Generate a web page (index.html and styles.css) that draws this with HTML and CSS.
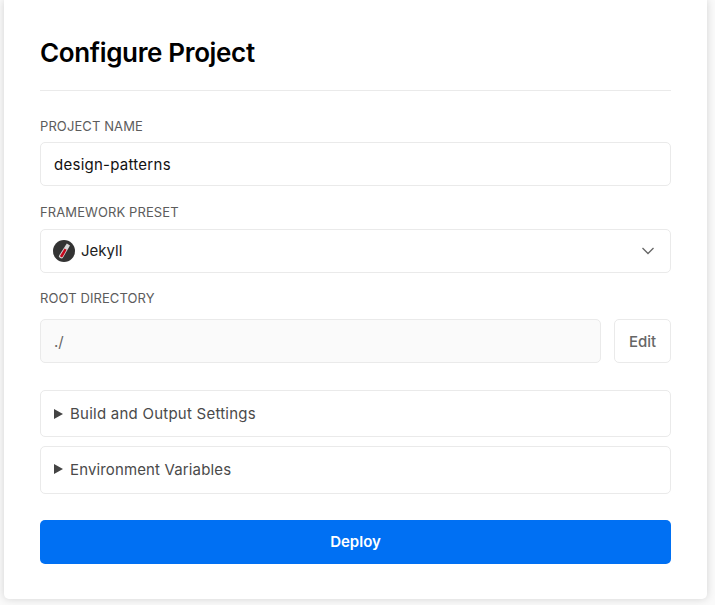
FILE: index.html
```html
<!DOCTYPE html>
<html lang="en">
<head>
<meta charset="utf-8">
<title>Configure Project</title>
<link rel="stylesheet" href="styles.css">
</head>
<body>
<main class="card">
  <h1 class="title">Configure Project</h1>
  <form class="form">
    <div class="field">
      <label class="label">PROJECT NAME</label>
      <div class="input name-input">design-patterns</div>
    </div>
    <div class="field">
      <label class="label">FRAMEWORK PRESET</label>
      <div class="input select">
        <svg class="logo" width="22" height="22" viewBox="0 0 22 22">
          <circle cx="11" cy="11" r="11" fill="#333"/>
          <path d="M13.8 3.6 17 5.4 10.2 17.2a2.2 2.2 0 0 1-3 .8 2.2 2.2 0 0 1-.8-3z" fill="#d8d8d8"/>
          <path d="M11.6 8.6 13.6 9.8 9.8 16.6a1.4 1.4 0 0 1-1.9.5 1.4 1.4 0 0 1-.5-1.9z" fill="#c4071b"/>
        </svg>
        <span class="select-text">Jekyll</span>
        <svg class="chevron" width="14" height="8" viewBox="0 0 14 8"><path d="M1.5 1 7 6.5 12.5 1" fill="none" stroke="#666" stroke-width="1.3"/></svg>
      </div>
    </div>
    <div class="field">
      <label class="label label-root">ROOT DIRECTORY</label>
      <div class="row">
        <div class="input disabled">./</div>
        <button type="button" class="edit">Edit</button>
      </div>
    </div>
    <div class="sections">
      <div class="section"><span class="tri"></span>Build and Output Settings</div>
      <div class="section section-env"><span class="tri"></span>Environment Variables</div>
    </div>
    <button type="button" class="deploy">Deploy</button>
  </form>
</main>
</body>
</html>
```

FILE: styles.css
```css
* { box-sizing: border-box; }
html, body { margin: 0; height: 605px; overflow: hidden; }
body {
  background: #fafafa;
  font-family: Inter, "Liberation Sans", sans-serif;
  padding: 0 8px 0 4px;
}
.card {
  background: #fff;
  height: 599px;
  border-radius: 0 0 5px 5px;
  padding: 36px 36px 0;
  box-shadow: 0 0 8px rgba(0,0,0,.16);
}
.title {
  margin: 0;
  font-size: 26px;
  line-height: 33px;
  font-weight: 600;
  color: #000;
  letter-spacing: -0.35px;
  padding-bottom: 21px;
  border-bottom: 1px solid #eaeaea;
}
.form { display: flex; flex-direction: column; }
.field { display: flex; flex-direction: column; }
.label {
  font-size: 13px;
  line-height: 16px;
  color: #5c5c5c;
  font-weight: 400;
  letter-spacing: 0.1px;
  margin-top: 17px;
  margin-bottom: 9px;
}
.field:first-child .label { margin-top: 27px; margin-bottom: 8px; }
.field:nth-child(2) .label { margin-top: 18px; margin-bottom: 9px; }
.label-root { margin-top: 17px; margin-bottom: 13px; }
.input {
  height: 44px;
  border: 1px solid #eaeaea;
  border-radius: 5px;
  padding: 0 13px;
  font-size: 15px;
  color: #111;
  display: flex;
  align-items: center;
  background: #fff;
}
.name-input { letter-spacing: 0.26px; }
.select { padding: 0 15px 0 12px; }
.logo { flex: none; }
.select-text { margin-left: 6px; flex: 1; color: #222; line-height: 20px; }
.row { display: flex; gap: 13px; }
.disabled { flex: 1; background: #fafafa; color: #666; }
.edit {
  width: 57px;
  height: 44px;
  border: 1px solid #eaeaea;
  border-radius: 5px;
  background: #fff;
  color: #666;
  font: 500 15px Inter, "Liberation Sans", sans-serif;
  padding: 0;
}
.sections { display: flex; flex-direction: column; gap: 9px; margin-top: 27px; }
.section {
  height: 47px;
  border: 1px solid #eaeaea;
  border-radius: 5px;
  display: flex;
  align-items: center;
  padding-left: 13px;
  font-size: 15px;
  color: #4a4a4a;
  letter-spacing: 0.24px;
}
.section-env { height: 48px; padding-bottom: 2px; letter-spacing: 0.14px; }
.tri {
  width: 0; height: 0;
  border-left: 9px solid #444;
  border-top: 5px solid transparent;
  border-bottom: 5px solid transparent;
  margin-right: 7px;
}
.deploy {
  margin-top: 26px;
  height: 44px;
  border: 0;
  border-radius: 5px;
  background: #0070f3;
  color: #fff;
  font: 600 15px Inter, "Liberation Sans", sans-serif;
  padding: 0 0 2px;
}
```
